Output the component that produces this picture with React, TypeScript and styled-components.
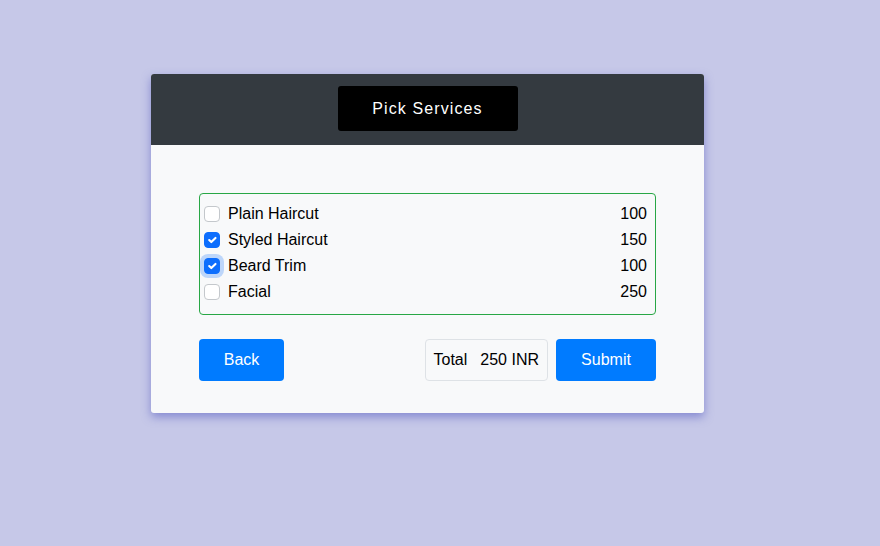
import { useState } from 'react'

import styled, { createGlobalStyle, css } from 'styled-components'

interface Service {
  id: number
  name: string
  price: number
}

const SERVICES: Service[] = [
  { id: 1, name: 'Plain Haircut', price: 100 },
  { id: 2, name: 'Styled Haircut', price: 150 },
  { id: 3, name: 'Beard Trim', price: 100 },
  { id: 4, name: 'Facial', price: 250 },
]

const CHECK_SVG =
  "url(\"data:image/svg+xml,%3csvg xmlns='http://www.w3.org/2000/svg' viewBox='0 0 20 20'%3e%3cpath fill='none' stroke='%23fff' stroke-linecap='round' stroke-linejoin='round' stroke-width='3' d='m6 10 3 3 6-6'/%3e%3c/svg%3e\")"

export default function App() {
  const [selected, setSelected] = useState<number[]>([2, 3])
  const focused = 3

  const toggle = (id: number) =>
    setSelected((prev) =>
      prev.includes(id) ? prev.filter((x) => x !== id) : [...prev, id],
    )

  const total = SERVICES.filter((s) => selected.includes(s.id)).reduce(
    (sum, s) => sum + s.price,
    0,
  )

  return (
    <>
      <GlobalStyle />
      <Page>
        <Card>
          <Header>
            <Title>Pick Services</Title>
          </Header>
          <Body>
            <ServiceList>
              {SERVICES.map((s) => (
                <ServiceRow key={s.id}>
                  <Check
                    type="checkbox"
                    checked={selected.includes(s.id)}
                    focused={s.id === focused}
                    onChange={() => toggle(s.id)}
                  />
                  <ServiceName>{s.name}</ServiceName>
                  <Price>{s.price}</Price>
                </ServiceRow>
              ))}
            </ServiceList>
            <Actions>
              <Button width={85}>Back</Button>
              <Right>
                <TotalBox>
                  <span>Total</span>
                  <span>{total} INR</span>
                </TotalBox>
                <Button width={100}>Submit</Button>
              </Right>
            </Actions>
          </Body>
        </Card>
      </Page>
    </>
  )
}

const GlobalStyle = createGlobalStyle`
  body {
    margin: 0;
    background: #c6c8e8;
    font-family: "Liberation Sans", Arial, sans-serif;
  }
`

const Page = styled.div`
  display: flex;
  justify-content: center;
  align-items: flex-start;
  padding: 74px 25px 0 0;
  min-height: 546px;
  box-sizing: border-box;
`

const Card = styled.div`
  width: 553px;
  background: #f8f9fa;
  border-radius: 3px;
  overflow: hidden;
  box-shadow: 0 4px 10px rgba(80, 86, 190, 0.55);
`

const Header = styled.div`
  height: 71px;
  background: #343a40;
  display: flex;
  justify-content: center;
  align-items: flex-start;
  padding-top: 12px;
  box-sizing: border-box;
`

const Title = styled.div`
  width: 180px;
  height: 45px;
  background: #000;
  border-radius: 3px;
  color: #fff;
  display: flex;
  align-items: center;
  justify-content: center;
  font-family: "Liberation Sans", Arial, sans-serif;
  font-size: 16px;
  letter-spacing: 1.1px;
`

const Body = styled.div`
  padding: 48px 48px 32px;
`

const ServiceList = styled.div`
  border: 1px solid #28a745;
  border-radius: 4px;
  padding: 7px 8px 9px 4px;
`

const ServiceRow = styled.label`
  display: flex;
  align-items: center;
  height: 26px;
  font-size: 16px;
  color: #000;
`

const Check = styled.input<{ focused?: boolean }>`
  appearance: none;
  width: 16px;
  height: 16px;
  margin: 0 8px 0 0;
  border: 1px solid #c4c8cc;
  border-radius: 4px;
  background: #fff;
  flex-shrink: 0;

  &:checked {
    background: #0d6efd ${CHECK_SVG} center / 100% no-repeat;
    border-color: #0d6efd;
  }

  ${({ focused }) =>
    focused &&
    css`
      box-shadow: 0 0 0 4px rgba(13, 110, 253, 0.25);
    `}
`

const ServiceName = styled.span`
  flex: 1;
`

const Price = styled.span``

const Actions = styled.div`
  display: flex;
  justify-content: space-between;
  margin-top: 24px;
`

const Right = styled.div`
  display: flex;
  gap: 8px;
`

const Button = styled.button<{ width: number }>`
  width: ${({ width }) => width}px;
  height: 42px;
  border: none;
  border-radius: 4px;
  background: #007bff;
  color: #fff;
  font-family: "Liberation Sans", Arial, sans-serif;
  font-size: 16px;
  padding: 0;
`

const TotalBox = styled.div`
  height: 42px;
  box-sizing: border-box;
  border: 1px solid #dee2e6;
  border-radius: 4px;
  display: flex;
  align-items: center;
  gap: 13px;
  padding: 0 8px;
  font-size: 16px;
  color: #000;
`
